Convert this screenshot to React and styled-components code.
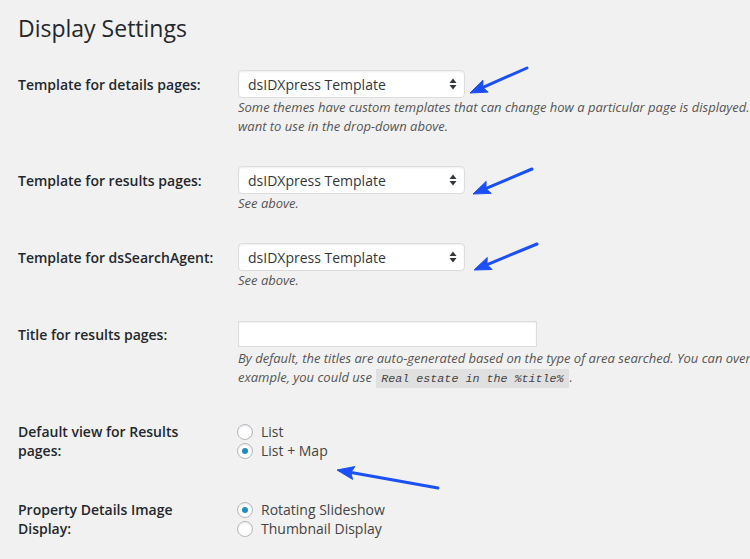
import React from "react";
import styled, { createGlobalStyle } from "styled-components";

const GlobalStyle = createGlobalStyle`
  html, body {
    margin: 0;
    padding: 0;
    background: #f1f1f1;
    overflow: hidden;
  }
  body {
    font-family: "Open Sans", "Liberation Sans", sans-serif;
    color: #23282d;
  }
`;

const Page = styled.div`
  position: relative;
  width: 1100px;
  height: 559px;
  padding-left: 18px;
  box-sizing: border-box;
`;

const Title = styled.h1`
  margin: 13px 0 0;
  font-size: 23px;
  font-weight: 400;
  line-height: 30px;
  color: #23282d;
`;

const Row = styled.div`
  display: grid;
  grid-template-columns: 220px 1fr;
  align-items: start;
  margin-top: ${(p) => p.$gap}px;
`;

const Label = styled.div`
  width: 200px;
  padding-top: ${(p) => p.$pad || 0}px;
  font-size: 14px;
  font-weight: 600;
  line-height: 19px;
  color: #23282d;
`;

const Field = styled.div`
  display: flex;
  flex-direction: column;
  align-items: flex-start;
`;

const SelectBox = styled.div`
  width: 227px;
  height: 28px;
  box-sizing: border-box;
  display: flex;
  align-items: center;
  justify-content: space-between;
  padding: 0 7px 0 9px;
  background: #fff;
  border: 1px solid #ddd;
  border-radius: 4px;
  box-shadow: inset 0 1px 2px rgba(0, 0, 0, 0.07);
  font-size: 14px;
  color: #32373c;
`;

const TextInput = styled.input`
  width: 299px;
  height: 26px;
  box-sizing: border-box;
  margin: 0;
  padding: 3px 5px;
  background: #fff;
  border: 1px solid #ddd;
  box-shadow: inset 0 1px 2px rgba(0, 0, 0, 0.07);
  font-family: inherit;
  font-size: 14px;
  outline: none;
`;

const Desc = styled.p`
  margin: ${(p) => p.$top || 0}px 0 0;
  font-size: 13px;
  font-style: italic;
  line-height: 19px;
  color: #555;
  white-space: nowrap;
`;

const Code = styled.code`
  font-family: "Liberation Mono", "DejaVu Sans Mono", monospace;
  font-size: 11.7px;
  font-style: italic;
  background: rgba(0, 0, 0, 0.07);
  padding: 3px 5px 2px;
  margin: 0 1px;
  color: #444;
`;

const RadioRow = styled.label`
  display: flex;
  align-items: center;
  gap: 8px;
  height: 19px;
  margin-left: -1px;
  font-size: 14px;
  color: #444;
`;

const RadioCircle = styled.span`
  width: 16px;
  height: 16px;
  box-sizing: border-box;
  border-radius: 50%;
  border: 1px solid #b4b9be;
  background: #fff;
  box-shadow: inset 0 1px 2px rgba(0, 0, 0, 0.1);
  display: flex;
  align-items: center;
  justify-content: center;

  &::after {
    content: "";
    width: 6px;
    height: 6px;
    border-radius: 50%;
    background: #1e8cbe;
    display: ${(p) => (p.$checked ? "block" : "none")};
  }
`;

const Overlay = styled.svg`
  position: absolute;
  left: 0;
  top: 0;
  width: 750px;
  height: 559px;
  pointer-events: none;
`;

function Select({ value }) {
  return (
    <SelectBox>
      <span>{value}</span>
      <svg width="8" height="12" viewBox="0 0 8 12">
        <path d="M4 0.5 L7.5 5 L0.5 5 Z" fill="#32373c" />
        <path d="M4 11.5 L7.5 7 L0.5 7 Z" fill="#32373c" />
      </svg>
    </SelectBox>
  );
}

function Radio({ checked, children }) {
  return (
    <RadioRow>
      <RadioCircle $checked={checked} />
      {children}
    </RadioRow>
  );
}

function Arrow({ from, to }) {
  const [x1, y1] = from;
  const [x2, y2] = to;
  const len = Math.hypot(x2 - x1, y2 - y1);
  const ux = (x2 - x1) / len;
  const uy = (y2 - y1) / len;
  const hl = 17;
  const hw = 6.5;
  const bx = x2 - ux * hl;
  const by = y2 - uy * hl;
  const head = `${x2},${y2} ${bx - uy * hw},${by + ux * hw} ${bx + ux * 3},${by + uy * 3} ${bx + uy * hw},${by - ux * hw}`;
  return (
    <g fill="#1b4ff7" stroke="#1b4ff7">
      <line x1={x1} y1={y1} x2={bx + ux * 4} y2={by + uy * 4} strokeWidth="3" strokeLinecap="round" />
      <polygon points={head} strokeWidth="1" strokeLinejoin="round" />
    </g>
  );
}

export default function App() {
  return (
    <>
      <GlobalStyle />
      <Page>
        <Title>Display Settings</Title>

        <Row $gap={27}>
          <Label $pad={5}>Template for details pages:</Label>
          <Field>
            <Select value="dsIDXpress Template" />
            <Desc>
              Some themes have custom templates that can change how a particular page is displayed. If your theme does have multiple templates, you can choose the one you
              <br />
              want to use in the drop-down above.
            </Desc>
          </Field>
        </Row>

        <Row $gap={30}>
          <Label $pad={5}>Template for results pages:</Label>
          <Field>
            <Select value="dsIDXpress Template" />
            <Desc>See above.</Desc>
          </Field>
        </Row>

        <Row $gap={30}>
          <Label $pad={5}>Template for dsSearchAgent:</Label>
          <Field>
            <Select value="dsIDXpress Template" />
            <Desc>See above.</Desc>
          </Field>
        </Row>

        <Row $gap={31}>
          <Label $pad={4}>Title for results pages:</Label>
          <Field>
            <TextInput type="text" defaultValue="" />
            <Desc $top={2}>
              By default, the titles are auto-generated based on the type of area searched. You can override this to use your own title. For
              <br />
              example, you could use <Code>Real estate in the %title%</Code>.
            </Desc>
          </Field>
        </Row>

        <Row $gap={33}>
          <Label>Default view for Results pages:</Label>
          <Field>
            <Radio>List</Radio>
            <Radio checked>List + Map</Radio>
          </Field>
        </Row>

        <Row $gap={40}>
          <Label>Property Details Image Display:</Label>
          <Field>
            <Radio checked>Rotating Slideshow</Radio>
            <Radio>Thumbnail Display</Radio>
          </Field>
        </Row>

        <Overlay viewBox="0 0 750 559">
          <Arrow from={[527, 55]} to={[470, 80]} />
          <Arrow from={[532, 156]} to={[473, 181]} />
          <Arrow from={[537, 231]} to={[474, 257]} />
          <Arrow from={[438, 475]} to={[337, 457]} />
        </Overlay>
      </Page>
    </>
  );
}
